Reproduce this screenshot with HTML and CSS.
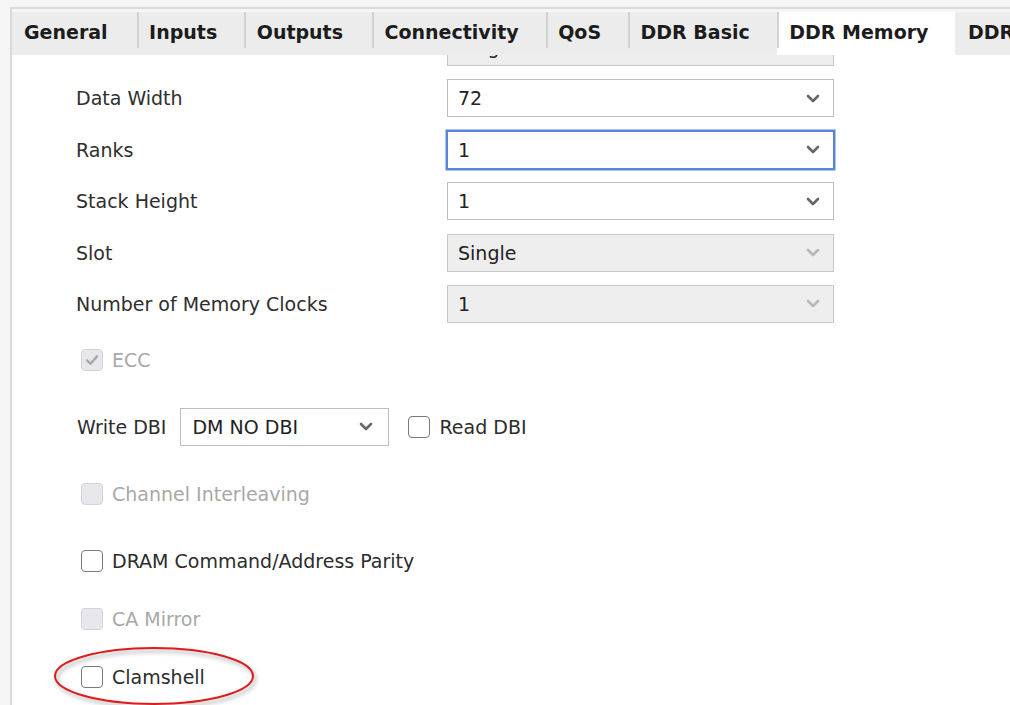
FILE: index.html
```html
<!DOCTYPE html>
<html>
<head>
<meta charset="utf-8">
<link rel="stylesheet" href="styles.css">
</head>
<body>
<div class="frame">
  <div class="tabbar">
    <div class="tab">General</div>
    <div class="tab">Inputs</div>
    <div class="tab tab-wide">Outputs</div>
    <div class="tab">Connectivity</div>
    <div class="tab">QoS</div>
    <div class="tab">DDR Basic</div>
    <div class="tab active">DDR Memory</div>
    <div class="tab">DDR Advanced</div>
  </div>
  <div class="panel">
    <div class="grid">
      <span class="lbl"></span>
      <div class="select disabled"><span>Single</span><svg class="chev" viewBox="0 0 14 9"><polyline points="2,2 7,7 12,2"/></svg></div>

      <span class="lbl">Data Width</span>
      <div class="select"><span>72</span><svg class="chev" viewBox="0 0 14 9"><polyline points="2,2 7,7 12,2"/></svg></div>

      <span class="lbl">Ranks</span>
      <div class="select focused"><span>1</span><svg class="chev" viewBox="0 0 14 9"><polyline points="2,2 7,7 12,2"/></svg></div>

      <span class="lbl">Stack Height</span>
      <div class="select"><span>1</span><svg class="chev" viewBox="0 0 14 9"><polyline points="2,2 7,7 12,2"/></svg></div>

      <span class="lbl">Slot</span>
      <div class="select disabled"><span>Single</span><svg class="chev" viewBox="0 0 14 9"><polyline points="2,2 7,7 12,2"/></svg></div>

      <span class="lbl">Number of Memory Clocks</span>
      <div class="select disabled"><span>1</span><svg class="chev" viewBox="0 0 14 9"><polyline points="2,2 7,7 12,2"/></svg></div>
    </div>

    <div class="check disabled row-ecc">
      <span class="box"><svg class="tick" viewBox="0 0 22 22"><polyline points="5.5,11.5 9.5,15 16.5,7"/></svg></span>
      <span>ECC</span>
    </div>

    <div class="dbi row-dbi">
      <span class="dbi-label">Write DBI</span>
      <div class="select small"><span>DM NO DBI</span><svg class="chev" viewBox="0 0 14 9"><polyline points="2,2 7,7 12,2"/></svg></div>
      <div class="check inline">
        <span class="box"></span>
        <span>Read DBI</span>
      </div>
    </div>

    <div class="check disabled row-chan">
      <span class="box"></span>
      <span>Channel Interleaving</span>
    </div>

    <div class="check row-dram">
      <span class="box"></span>
      <span>DRAM Command/Address Parity</span>
    </div>

    <div class="check disabled row-ca">
      <span class="box"></span>
      <span>CA Mirror</span>
    </div>

    <div class="check row-clam">
      <span class="box"></span>
      <span>Clamshell</span>
    </div>

    <svg class="annot" width="220" height="70" viewBox="0 0 220 70">
      <ellipse cx="102" cy="33" rx="99" ry="28"/>
    </svg>
  </div>
</div>
</body>
</html>
```

FILE: styles.css
```css
html, body {
  margin: 0;
  padding: 0;
}
body {
  width: 1010px;
  height: 705px;
  overflow: hidden;
  background: #f5f5f5;
  font-family: "DejaVu Sans", "Liberation Sans", sans-serif;
  font-size: 19px;
  color: #2c2c2c;
}
.frame {
  margin: 7px 0 0 10px;
  height: 698px;
  border-top: 2px solid #dadada;
  border-left: 2px solid #dadada;
  box-sizing: border-box;
  display: flex;
  flex-direction: column;
}
.tabbar {
  display: flex;
  padding-top: 3px;
  overflow: hidden;
  white-space: nowrap;
  flex: none;
}
.tab {
  flex: none;
  height: 43px;
  box-sizing: border-box;
  padding: 0 27px 3px 12.5px;
  display: flex;
  align-items: center;
  font-weight: bold;
  color: #1c1c1c;
  background: linear-gradient(#d2d2d2, #d2d2d2) left top / 2px 36px no-repeat, #ececec;
}
.tab:first-child {
  background: #ececec;
  padding-left: 12px;
  padding-right: 29px;
}
.tab.tab-wide {
  padding-right: 29px;
}
.tab.active {
  background: linear-gradient(#d2d2d2, #d2d2d2) left top / 2px 36px no-repeat, #ffffff;
}
.tab.active + .tab {
  background: #ececec;
}
.panel {
  flex: 1;
  background: #ffffff;
  overflow: hidden;
  position: relative;
  padding-left: 64px;
}
.grid {
  display: grid;
  grid-template-columns: 371px 387px;
  row-gap: 13.4px;
  align-items: center;
  margin-top: -27px;
}
.lbl {
  color: #2e2e2e;
}
.select {
  height: 38px;
  box-sizing: border-box;
  border: 1px solid #bdbdbd;
  background: #ffffff;
  display: flex;
  align-items: center;
  justify-content: space-between;
  padding: 0 13px 0 10px;
  color: #222;
}
.select.disabled {
  background: #eeeeee;
  border-color: #c8c8c8;
}
.select.focused {
  border-color: #5a86d6;
  box-shadow: 0 0 0 1.5px #5a86d6;
}
.chev {
  width: 14px;
  height: 9px;
  fill: none;
  stroke: #666666;
  stroke-width: 2.6;
  stroke-linecap: round;
  stroke-linejoin: round;
}
.select.disabled .chev {
  stroke: #b8b8b8;
}
.check {
  display: flex;
  align-items: center;
  gap: 9px;
  height: 24px;
  margin-left: 5px;
  color: #2c2c2c;
}
.check.disabled {
  color: #a8a8a8;
}
.box {
  width: 22px;
  height: 22px;
  box-sizing: border-box;
  border: 1.5px solid #7a7a7a;
  border-radius: 4px;
  background: #ffffff;
  display: flex;
  align-items: center;
  justify-content: center;
  flex: none;
}
.check.disabled .box {
  background: #e8e8ec;
  border-color: #d3d3d7;
}
.tick {
  width: 22px;
  height: 22px;
  fill: none;
  stroke: #a9a9a9;
  stroke-width: 2.6;
  stroke-linecap: round;
  stroke-linejoin: round;
}
.row-ecc { margin-top: 25.5px; }
.row-dbi { margin-top: 35.5px; }
.row-chan { margin-top: 36px; }
.row-dram { margin-top: 43.5px; }
.row-ca { margin-top: 34px; }
.row-clam { margin-top: 34px; }

.dbi {
  display: flex;
  align-items: center;
  margin-left: 1px;
}
.dbi-label {
  margin-right: 14px;
}
.select.small {
  width: 209px;
  padding-right: 15px;
  padding-left: 11px;
}
.check.inline {
  margin-left: 19px;
}
.annot {
  position: absolute;
  left: 40px;
  top: 588px;
  overflow: visible;
}
.annot ellipse {
  fill: none;
  stroke: #de1c1c;
  stroke-width: 2;
  filter: drop-shadow(2px 3px 2px rgba(0, 0, 0, 0.35));
}
```
